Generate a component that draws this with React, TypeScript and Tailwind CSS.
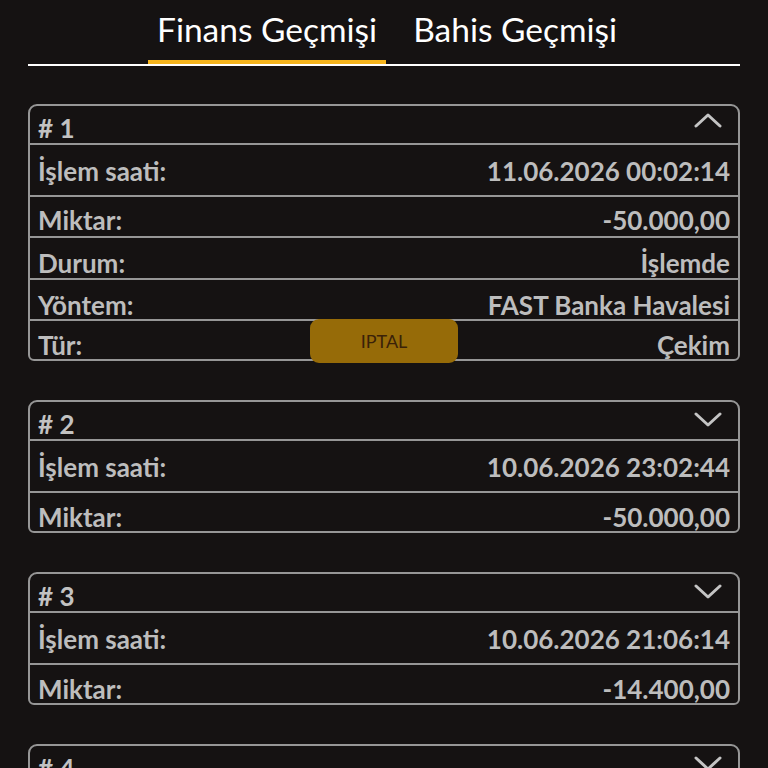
import React from "react";

const font = { fontFamily: "Lato, 'Noto Sans', sans-serif" };

type Row = { label: string; value: string; h: number; pb: number };

function Chevron({ up }: { up?: boolean }) {
  return (
    <svg width="28" height="16" viewBox="0 0 28 16" fill="none">
      {up ? (
        <path d="M2 14 L14 3 L26 14" stroke="#c4c4c4" strokeWidth="3" strokeLinecap="round" strokeLinejoin="round" />
      ) : (
        <path d="M2 2 L14 13 L26 2" stroke="#c4c4c4" strokeWidth="3" strokeLinecap="round" strokeLinejoin="round" />
      )}
    </svg>
  );
}

function Card({ n, rows, open }: { n: number; rows: Row[]; open?: boolean }) {
  return (
    <div className="relative rounded-t-[9px] rounded-b-[6px] border-2 border-[#969696]">
      <div className="flex h-[39px] items-end justify-between border-b-2 border-[#969696] px-[8px]">
        <span className="pb-[2px] text-[26px] font-bold leading-none text-[#c2c2c2]">{"# " + n}</span>
        <span className={open ? "mb-[15px] mr-[8px]" : "mb-[11px] mr-[8px]"}>
          <Chevron up={open} />
        </span>
      </div>
      {rows.map((r, i) => (
        <div
          key={r.label}
          className={
            "flex items-end justify-between px-[8px] " +
            (i < rows.length - 1 ? "border-b-2 border-[#969696]" : "")
          }
          style={{ height: r.h, paddingBottom: r.pb }}
        >
          <span className="text-[26px] font-bold leading-none text-[#bdbdbd]">{r.label}</span>
          <span className="text-[26px] font-bold leading-none text-[#bdbdbd]">{r.value}</span>
        </div>
      ))}
      {open && (
        <button className="absolute bottom-[-4px] left-1/2 flex h-[44px] w-[148px] -translate-x-1/2 items-center justify-center rounded-[9px] bg-[#966b08] text-[18px] text-[#3a2208]">
          IPTAL
        </button>
      )}
    </div>
  );
}

export default function App() {
  return (
    <div className="h-[768px] w-full overflow-hidden bg-[#151212] px-[28px]" style={font}>
      <div className="flex h-[66px] items-end border-b-2 border-white pl-[120px]">
        <div className="flex h-[64px] items-center border-b-4 border-[#f6b51e] px-[9px] pb-[2px] text-[33.5px] text-white">
          Finans Geçmişi
        </div>
        <div className="ml-[17px] flex h-[64px] items-center border-b-4 border-transparent px-[10px] pb-[2px] text-[33.5px] text-white">
          Bahis Geçmişi
        </div>
      </div>
      <div className="mt-[38px] flex flex-col gap-[39px]">
        <Card
          n={1}
          open
          rows={[
            { label: "İşlem saati:", value: "11.06.2026 00:02:14", h: 52, pb: 11 },
            { label: "Miktar:", value: "-50.000,00", h: 41, pb: 3 },
            { label: "Durum:", value: "İşlemde", h: 42, pb: 2 },
            { label: "Yöntem:", value: "FAST Banka Havalesi", h: 41, pb: 1 },
            { label: "Tür:", value: "Çekim", h: 38, pb: 1 },
          ]}
        />
        <Card
          n={2}
          rows={[
            { label: "İşlem saati:", value: "10.06.2026 23:02:44", h: 52, pb: 11 },
            { label: "Miktar:", value: "-50.000,00", h: 38, pb: 1 },
          ]}
        />
        <Card
          n={3}
          rows={[
            { label: "İşlem saati:", value: "10.06.2026 21:06:14", h: 52, pb: 11 },
            { label: "Miktar:", value: "-14.400,00", h: 38, pb: 1 },
          ]}
        />
        <Card
          n={4}
          rows={[
            { label: "İşlem saati:", value: "10.06.2026 20:11:52", h: 52, pb: 11 },
            { label: "Miktar:", value: "-10.000,00", h: 38, pb: 1 },
          ]}
        />
      </div>
    </div>
  );
}
